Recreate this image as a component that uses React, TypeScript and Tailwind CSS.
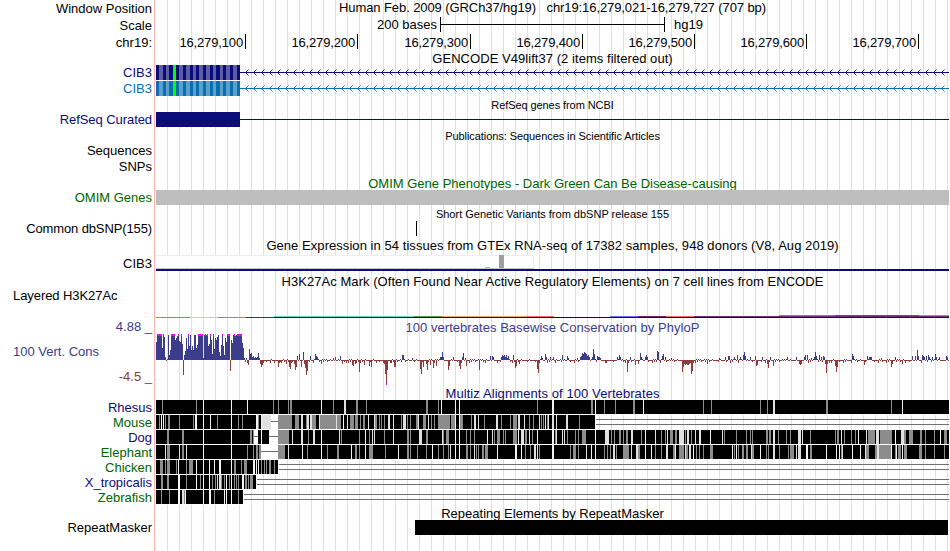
import React from 'react';

type RowProps = { label?: React.ReactNode; tone?: string; h: string; lh?: string; children?: React.ReactNode };

// One track row: right-aligned name column followed by the plot area (x = 156..949).
function Row({ label, tone = 'text-black', h, lh = '', children }: RowProps) {
  return (
    <div className={`flex w-[949px] shrink-0 ${h}`}>
      <div className={`w-[156px] shrink-0 overflow-visible whitespace-nowrap pr-[4px] text-right ${tone} ${lh}`}>{label}</div>
      <div className="w-[793px] shrink-0">{children}</div>
    </div>
  );
}

function Plot({ h, children }: { h: number; children: React.ReactNode }) {
  return (
    <svg className="block overflow-visible" width={793} height={h} viewBox={`156 0 793 ${h}`} shapeRendering="crispEdges">
      {children}
    </svg>
  );
}

function Title({ h, cls, children }: { h: string; cls: string; children: React.ReactNode }) {
  return (
    <div className={`flex w-[949px] shrink-0 justify-center overflow-visible pl-[156px] whitespace-pre ${h} ${cls}`}>
      <span>{children}</span>
    </div>
  );
}

const TICKS: [number, string][] = [
  [245, '16,279,100'], [357, '16,279,200'], [470, '16,279,300'], [582, '16,279,400'],
  [694, '16,279,500'], [806, '16,279,600'], [918, '16,279,700'],
];

function Gene({ color, light }: { color: string; light: string }) {
  const codons = [0, 1, 3, 4, 5, 6, 7, 8, 9, 10, 11].map((k) => {
    const start = Math.round(159 + 6.73 * k);
    return [start, Math.round(162.6 + 6.73 * k) - start];
  });
  const arrows = Array.from({ length: 88 }, (_, i) => 245 + i * 8);
  return (
    <Plot h={15}>
      <rect x={156} y={0} width={84} height={15} fill={color} />
      {codons.map(([x, w]) => <rect key={x} x={x} y={0} width={w} height={15} fill={light} />)}
      <rect x={173} y={0} width={3} height={15} fill="#00ff00" />
      <rect x={240} y={7} width={709} height={1} fill={color} />
      <path
        d={arrows.map((x) => `M${x + 1} 6h1v1h-1zM${x + 1} 8h1v1h-1zM${x + 2} 5h1v1h-1zM${x + 2} 9h1v1h-1z`).join('')}
        fill={color} fillOpacity={0.85}
      />
      <path d={arrows.map((x) => `M${x + 3} 4h1v1h-1zM${x + 3} 10h1v1h-1z`).join('')} fill={color} fillOpacity={0.45} />
    </Plot>
  );
}

const DENSE = [
  18, 26, 26, 26, 26, 26, 12, 26, 23, 3, -1, 1, 25, 5, 10, 26, 26, 26, 26, 20, 22, 24, 26, 19, 18, 26, 16, -15, 5, 9,
  22, 11, 26, 14, 25, 10, 14, 10, 25, 25, 12, 15, 26, 26, 26, 26, 26, 2, 25, 26, 25, 26, 14, 16, 26, 20, 6, 26, 11, 22,
  20, 23, 25, 8, 4, 15, 26, 14, 5, 22, 18, 26, 26, 26, -11, 20, 17, 25, 26, 24, 25, 26, 26, 26, 26, 26, 17, 12,
];

const SPARSE: Record<number, number> = {
  244: 2, 245: -2, 246: 2, 247: -3, 248: -5, 249: 11, 250: 6, 251: 7, 252: 3, 253: 4, 254: 2, 255: 3, 256: 2, 257: 3, 258: 7, 259: 2,
  260: -4, 261: -7, 262: -5, 263: -3, 274: -3, 278: -7, 279: -3, 281: -3, 286: -4, 289: -7, 290: -9, 291: -3, 294: -4, 295: -10, 296: -7, 297: 4,
  299: 6, 301: -7, 303: 8, 304: -4, 305: -8, 306: -15, 307: -11, 310: 4, 313: -3, 315: 6, 316: 4, 317: 3,
  321: -4, 333: 2, 335: 3, 340: 4, 342: -4, 346: -3, 352: -5, 353: -6, 355: -4, 359: -12, 360: -3, 364: -5, 369: -6, 371: -7, 376: -3,
  384: -4, 385: -14, 386: -24, 387: -10, 390: -3, 394: -7, 395: -7, 402: 5, 403: 5, 412: 2, 420: -9, 421: -14, 423: -7, 426: -4, 427: -10, 430: -5, 433: -8, 436: -6,
  440: 3, 441: 3, 442: 8, 443: 3, 448: -10, 449: -6, 453: 3, 459: -6, 460: -9, 462: 3, 463: 7, 465: 2, 466: -6, 479: -10, 485: -3, 490: 4, 492: 4, 493: 3, 497: -3,
  501: 3, 502: 5, 503: 4, 504: 5, 505: 3, 506: 5, 507: 2, 508: 4, 513: 5, 515: -8, 516: -6, 519: -4, 537: -9, 538: -13, 541: 4, 542: 2, 545: 6, 546: 3,
  550: 3, 553: 3, 555: -3, 562: 5, 567: 4, 568: 2, 577: 2, 580: 3, 581: 4, 582: 7, 583: 6, 584: 8, 585: 7, 586: 6, 587: 4, 588: 5, 589: 3, 592: 3, 593: 11, 594: 6,
  597: 4, 598: 3, 599: 3, 600: 2, 605: -3, 606: -3, 617: 3, 619: 5, 620: 3, 627: -12, 628: -3, 630: 3, 635: -5, 638: -4, 640: 7, 641: 3, 645: 3, 646: 5, 647: 3,
  657: 9, 658: 8, 662: 4, 663: 6, 665: 3, 671: 2, 682: -12, 683: -7, 684: -4, 685: -5, 686: -4, 687: -5, 688: -5, 689: -4, 690: -3, 691: -14, 692: -11, 693: -3,
  707: -4, 719: 2, 725: 3, 728: 4, 729: 4, 734: 3, 737: 5, 740: 3, 743: 5, 744: 8, 745: 4, 750: 3, 755: 4, 756: -6, 757: -5, 762: 3, 767: -4, 768: -8, 770: 3, 773: -6,
  787: 3, 796: 3, 799: -4, 800: -5, 801: -4, 804: 3, 805: 5, 807: 5, 811: 2, 814: 3, 815: 8, 816: 4, 819: 5, 821: 3, 823: 4, 824: 3, 825: -4, 826: -13, 827: -4, 829: -3,
  831: -3, 835: -6, 836: -12, 837: -7, 852: 6, 853: 4, 864: -5, 867: 4, 869: 3, 870: 3, 871: 3, 881: 2, 891: -7, 892: -4, 895: 3, 902: -4, 905: -3, 912: 4, 915: 4,
  917: 10, 918: 4, 922: 5, 923: 4, 924: 3, 926: 4, 928: 5, 929: 3, 932: 3, 935: 6, 936: 3, 939: 3, 946: 4, 947: 3,
};

function Conservation() {
  const noise = [-1, -2, -1, 1, -1, -1, -3, -1, 1, -1, -2, -1, 1, 1, -1, -1, -2, -1, -1];
  const vals: [number, number][] = [];
  for (let x = 156; x < 949; x++) {
    const i = x - 156;
    const v = i < DENSE.length ? DENSE[i] : (SPARSE[x] ?? noise[(x * 7 + (x >> 4)) % noise.length]);
    vals.push([x, v]);
  }
  const bar = ([x, v]: [number, number]) => (v > 0 ? `M${x} ${26 - v}h1V26h-1z` : `M${x} 26h1v${-v}h-1z`);
  return (
    <Plot h={52}>
      <path d={vals.filter(([, v]) => v > 0).map(bar).join('')} fill="#3c3c8c" />
      <path d={vals.filter(([, v]) => v < 0).map(bar).join('')} fill="#8c3c3c" />
      <path d={vals.filter(([, v]) => v === 26).map(([x]) => `M${x} 0h1v2h-1z`).join('')} fill="#ff00ff" />
      <rect x={386} y={49} width={1} height={2} fill="#ff00ff" />
    </Plot>
  );
}

// Stripes are "x" or "x:width"; g = mid gray, l = light gray, w = near white.
type Species = { name: string; tone: string; end: number; g: string; l: string; w: string; gaps?: [number, number][]; tail?: number };

const SPECIES: Species[] = [
  {
    name: 'Rhesus', tone: 'text-[#0c0c78]', end: 949,
    g: '162 196 273 278 288 290:2 333 356:2 366 426:2 438 537 591:2 604 615 633:2 703 711 760 767 826:2 891',
    l: '344:2 773:2', w: '203 231 247 321 441 455 459 552:2 595 643 902',
  },
  {
    name: 'Mouse', tone: 'text-[#006400]', end: 595, tail: 596, gaps: [[271, 278]],
    g: '159 165 168:2 179 193 217 238 242 258 278:14 295:4 306 312:4 320:16 337:4 350:4 355:3 360 363:2 375:2 379 381 384 401 407 410 416:2 423:3 431 434 438:12 451:4 460:3 471 484 501 510 513:4 529 533 541 543 547 579',
    l: '262:9 301:2 307:2 310:2 319 336 347 368 374 388:2 393 403:3 418 428 474:2 478 496:2 518:2 524 539 545 548 552:2 556 566:2',
    w: '161 163 195:2 203 210 231 256:2 261 343 455 459',
  },
  {
    name: 'Dog', tone: 'text-[#0c0c78]', end: 949, gaps: [[254, 258], [269, 278]],
    g: '167:2 182:2 250:2 253 278:11 308 341 359 369 384 407:2 410 426:2 443 446:3 466 470 474 494 497:3 503 505 513:4 525:2 532 555 567 575 578 582:4 611 614 619:2 623 626:2 641 661 665 670:3 675:2 685 691 724 736 746 750 752 766:2 769:2 778 786 790 810 835 837:2 844 851 855 868:7 880:12 904:2 909:4 920:2 925 934 944:3',
    l: '292 301:2 313:2 339 372 374 393 419:3 442 492 521:3 529 556 562 564 605:4 631:2 655 667 679:5 687:2 695 699:2 722 773:2 798:3 802 841 866 876:3 901:3',
    w: '203 231 261 321 365 455 459 487 518 537 552:2 595 645 710 858 895 940',
  },
  {
    name: 'Elephant', tone: 'text-[#006400]', end: 949, gaps: [[261, 278]],
    g: '167:3 182:2 247 253 256:2 259:2 278:7 307 327 337:2 355:2 359 369 370:3 385 407:2 410 417 426 438 443 448 466:2 470 476 478 482:2 485:3 525 530 539 570 573:3 578 604 607 610 616 623:6 638:2 655 661 673:2 679:5 686:2 696 699 703 710:3 734 738 742:2 746:2 752:2 766 768 779 788 790:4 810:2 841 866:3 875:2 879:12 895 898:3 904:3 919:3 925 934 944',
    l: '165 179 186 288 450 474 534:2 537 586 613:2 631 636:2 666:2 685 689:2 751 773:2 796 798:3 842 865 877:2',
    w: '203 231 302 321 351 365 398 432 455 459 497 515:2 521 552:2 591 595 645 651 675 693 732 736 760 806:2 826 836 839 852 860 891 896 902',
  },
  {
    name: 'Chicken', tone: 'text-[#006400]', end: 278, tail: 279,
    g: '160:3 165 167:3 176 186 189:4 234:2 241 244:3 261 264 266 269:2 274', l: '', w: '178 196 203 209 214 219:2 231 253:2 256 258',
  },
  {
    name: 'X_tropicalis', tone: 'text-[#0c0c78]', end: 256, tail: 257,
    g: '161:2 167:2 186 200 212 215 221 224 229 234 236 238 245:2 248 250:3', l: '217 219:2', w: '178:2 196 203 209 226 231 242:2',
  },
  {
    name: 'Zebrafish', tone: 'text-[#006400]', end: 243, tail: 244,
    g: '161 169 184 214 238', l: '182:2', w: '178:2 185 203 209:2 224 226 231',
  },
];

function stripes(s: string) {
  return s.split(' ').filter(Boolean).map((t) => {
    const [x, w = '1'] = t.split(':');
    return `M${x} 0h${w}v14h-${w}z`;
  }).join('');
}

function Alignment({ s }: { s: Species }) {
  return (
    <Plot h={15}>
      <rect x={156} y={0} width={s.end - 156} height={14} fill="#000" />
      <rect x={156} y={14} width={s.end - 156} height={1} fill="#fff" />
      <path d={stripes(s.g)} fill="#8c8c8c" />
      <path d={stripes(s.l)} fill="#e0e0e0" />
      <path d={stripes(s.w)} fill="#f4f4f4" />
      {s.gaps?.map(([a, b]) => (
        <g key={a}>
          <rect x={a} y={0} width={b - a} height={14} fill="#fff" />
          <rect x={a} y={6} width={b - a} height={1} fill="#707070" />
        </g>
      ))}
      {s.tail && <path d={`M${s.tail} 4H949v1H${s.tail}zM${s.tail} 9H949v1H${s.tail}z`} fill="#707070" />}
    </Plot>
  );
}

const MARKS: [number, number, number, string][] = [
  [156, 190, 37, '#f0643c'], [190, 218, 37, '#f5c87d'], [218, 246, 37, '#e9635c'], [246, 274, 37, '#64283c'],
  [274, 949, 37, '#230a32'], [274, 414, 36, '#5fe0b8'], [414, 442, 36, '#5f9b41'], [442, 526, 36, '#f0aa50'],
  [526, 554, 36, '#f56e6e'], [610, 638, 36, '#6e6eff'], [638, 666, 36, '#6e2864'], [666, 694, 36, '#f56e6e'],
  [694, 949, 36, '#6e2d78'], [779, 835, 35, '#7878f0'], [835, 919, 35, '#82417d'], [919, 949, 35, '#f56e78'],
];

export default function App() {
  return (
    <div className="flex h-[551px] w-[949px] flex-col overflow-hidden bg-white bg-[linear-gradient(90deg,#fff_154px,#ffb4b4_154px,#ffb4b4_155px,#fff_155px,#fff_156px,transparent_156px),repeating-linear-gradient(90deg,transparent_0px,transparent_11px,#dcdcff_11px,#dcdcff_12px)] font-['Liberation_Sans',Arial,sans-serif] text-[13px] leading-[15px] text-black">
      <div className="flex h-[17px] shrink-0">
        <div className="w-[156px] shrink-0 pr-[4px] pt-px text-right">Window Position</div>
        <div className="w-[793px] text-center tracking-[-0.087px] whitespace-pre">Human Feb. 2009 (GRCh37/hg19)   chr19:16,279,021-16,279,727 (707 bp)</div>
      </div>
      <Row label="Scale" h="h-[17px]" lh="leading-[17px]">
        <Plot h={17}>
          <path d="M440 0h1v15h-1zM664 0h1v15h-1zM440 7h224v1h-224z" />
          <text x={437} y={12} textAnchor="end">200 bases</text>
          <text x={674} y={12}>hg19</text>
        </Plot>
      </Row>
      <Row label="chr19:" h="h-[17px]" lh="leading-[17px]">
        <Plot h={17}>
          {TICKS.map(([x, t]) => (
            <g key={x}>
              <rect x={x} y={0} width={1} height={15} />
              <text className="tracking-[-0.15px]" x={x - 2} y={13} textAnchor="end">{t}</text>
            </g>
          ))}
        </Plot>
      </Row>
      <Title h="h-[14px]" cls="tracking-[0.05px]">GENCODE V49lift37 (2 items filtered out)</Title>
      <Row label="CIB3" tone="text-[#0c0c78]" h="h-[16px]"><Gene color="#0c0c78" light="#5d5da5" /></Row>
      <Row label="CIB3" tone="text-[#0c6eb4]" h="h-[16px]"><Gene color="#0c6eb0" light="#5d9fcb" /></Row>
      <Title h="h-[15px]" cls="text-[11px] leading-[17px] tracking-[-0.08px]">RefSeq genes from NCBI</Title>
      <Row label="RefSeq Curated" tone="text-[#0c0c78] tracking-[-0.07px]" h="h-[16px]">
        <Plot h={15}>
          <rect x={156} y={0} width={84} height={15} fill="#0c0c78" />
          <rect x={240} y={7} width={709} height={1} fill="#0c0c78" />
        </Plot>
      </Row>
      <Title h="h-[15px]" cls="text-[11px] leading-[17px] tracking-[-0.065px]">Publications: Sequences in Scientific Articles</Title>
      <Row label="Sequences" h="h-[16px]" />
      <Row label="SNPs" h="h-[16px]" />
      <Title h="h-[15px]" cls="text-[#006400] leading-[18px]">OMIM Gene Phenotypes - Dark Green Can Be Disease-causing</Title>
      <Row label="OMIM Genes" tone="text-[#006400]" h="h-[16px]">
        <Plot h={15}><rect x={156} y={0} width={793} height={15} fill="#bebebe" /></Plot>
      </Row>
      <Title h="h-[15px]" cls="text-[11px] leading-[17px]">Short Genetic Variants from dbSNP release 155</Title>
      <Row label="Common dbSNP(155)" tone="text-black tracking-[-0.12px]" h="h-[16px]">
        <Plot h={15}><rect x={416} y={0} width={1} height={15} /></Plot>
      </Row>
      <Title h="h-[18px]" cls="leading-[17px] tracking-[0.055px]">Gene Expression in 54 tissues from GTEx RNA-seq of 17382 samples, 948 donors (V8, Aug 2019)</Title>
      <Row label="CIB3" h="h-[18px]" lh="leading-[18px]">
        <Plot h={17}>
          <rect x={156} y={0} width={378} height={14} fill="#eeeeee" />
          <rect x={156} y={1} width={377} height={12} fill="#fff" />
          <rect x={156} y={13} width={378} height={1} fill="#c8c8c8" />
          <rect x={485} y={12} width={5} height={1} fill="#c8b48c" />
          <rect x={499} y={0} width={5} height={13} fill="#a0a0a0" />
          <rect x={156} y={14} width={793} height={2} fill="#0c0c78" />
        </Plot>
      </Row>
      <Title h="h-[7px]" cls="leading-[18px] tracking-[0.05px]">H3K27Ac Mark (Often Found Near Active Regulatory Elements) on 7 cell lines from ENCODE</Title>
      <div className="flex h-[39px] shrink-0">
        <div className="w-[156px] shrink-0 pl-[13px] pt-[8px] tracking-[-0.07px]">Layered H3K27Ac</div>
        <Plot h={39}>
          {MARKS.map(([a, b, y, c], i) => <rect key={i} x={a} y={y} width={b - a} height={1} fill={c} />)}
        </Plot>
      </div>
      <Title h="h-[15px]" cls="text-[#3c3c8c] leading-[17px] tracking-[0.045px]">100 vertebrates Basewise Conservation by PhyloP</Title>
      <div className="flex h-[52px] shrink-0">
        <div className="flex w-[156px] shrink-0 flex-col text-[#3c3c8c]">
          <div className="-mt-[15px] pr-[4px] text-right">4.88 _</div>
          <div className="mt-[10px] pl-[13px]">100 Vert. Cons</div>
          <div className="mt-[10px] pr-[4px] text-right text-[#8c3c3c]">-4.5 _</div>
        </div>
        <Conservation />
      </div>
      <Title h="h-[14px]" cls="text-[#0c0c78] leading-[16px] tracking-[0.085px]">Multiz Alignments of 100 Vertebrates</Title>
      {SPECIES.map((s) => (
        <Row key={s.name} label={s.name} tone={s.tone} h="h-[15px]"><Alignment s={s} /></Row>
      ))}
      <Title h="h-[15px]" cls="leading-[17px]">Repeating Elements by RepeatMasker</Title>
      <Row label="RepeatMasker" h="h-[16px]">
        <Plot h={15}><rect x={415} y={0} width={533} height={15} /></Plot>
      </Row>
    </div>
  );
}
